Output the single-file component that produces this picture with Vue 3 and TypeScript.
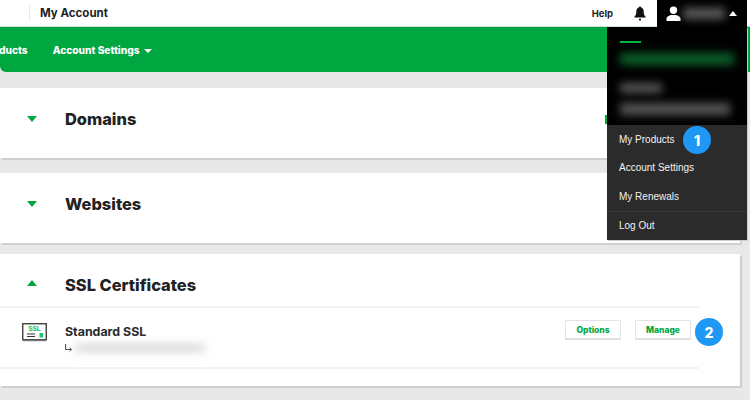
<script setup lang="ts">
interface Section { title: string; peek: boolean }
const collapsed: Section[] = [
  { title: 'Domains', peek: true },
  { title: 'Websites', peek: false },
]
const menu: string[] = ['My Products', 'Account Settings', 'My Renewals']
</script>

<template>
  <div class="page">
    <header class="topbar">
      <div class="brand"><span class="title">My Account</span></div>
      <div class="top-right">
        <span class="help">Help</span>
        <svg class="bell" width="12" height="15" viewBox="0 0 12 15">
          <path d="M6 0.5c.7 0 1.1.5 1.1 1.1 1.700.5 2.600 1.900 2.600 3.800 0 2.600.5 3.900 1.800 5.200v.9H.5v-.9C1.800 9.300 2.300 8 2.300 5.400c0-1.900.9-3.300 2.600-3.800C4.900 1 5.300.5 6 .5z" fill="#111" />
          <circle cx="6" cy="13.600" r="1.100" fill="#111" />
        </svg>
        <div class="user">
          <svg width="15" height="15" viewBox="0 0 15 15">
            <circle cx="7.500" cy="4.200" r="3.700" fill="#fff" />
            <path d="M0.500 15v-2.400c0-1.800 2.600-3 4.700-3.600h4.600c2.100.6 4.700 1.800 4.700 3.600V15z" fill="#fff" />
          </svg>
          <span class="blur user-name"></span>
          <span class="caret-up"></span>
        </div>
      </div>
    </header>

    <nav class="nav">
      <span class="nav-item products">Products</span>
      <span class="nav-item">Account Settings <i class="caret-down"></i></span>
    </nav>

    <main class="content">
      <section v-for="s in collapsed" :key="s.title" class="card">
        <div class="card-head">
          <span class="arrow down"></span>
          <h2>{{ s.title }}</h2>
          <span v-if="s.peek" class="peek"></span>
        </div>
      </section>

      <section class="card ssl">
        <div class="ssl-head">
          <span class="arrow up"></span>
          <h2>SSL Certificates</h2>
        </div>
        <div class="ssl-row">
          <svg class="cert" width="25" height="19" viewBox="0 0 25 19">
            <rect x="0.750" y="0.750" width="23.500" height="16" fill="#fff" stroke="#333" stroke-width="1.300" />
            <path d="M1 17.500h23" stroke="#777" stroke-width="1.400" />
            <text x="12.500" y="8" class="cert-text">SSL</text>
            <path d="M5 11h8M5 13.500h8" stroke="#333" stroke-width="1.200" />
            <rect x="17.500" y="10" width="3.500" height="4.500" fill="#1ec468" />
          </svg>
          <div class="ssl-info">
            <div class="ssl-name">Standard SSL</div>
            <div class="ssl-sub">
              <svg width="8" height="8" viewBox="0 0 8 8">
                <path d="M.6 0v5.500h5.400M4.600 3.800 6.600 5.500 4.600 7.200" fill="none" stroke="#444" stroke-width="1" />
              </svg>
              <span class="blur email"></span>
            </div>
          </div>
          <div class="actions">
            <button class="btn">Options</button>
            <button class="btn">Manage</button>
          </div>
          <span class="badge badge-two">2</span>
        </div>
      </section>
    </main>

    <aside class="dropdown">
      <div class="account-block">
        <span class="accent"></span>
        <span class="blur line-green"></span>
        <span class="blur line-gray short"></span>
        <span class="blur line-gray long"></span>
      </div>
      <ul class="menu">
        <li v-for="m in menu" :key="m">{{ m }}</li>
        <li class="logout">Log Out</li>
      </ul>
      <span class="badge badge-one">1</span>
    </aside>
  </div>
</template>

<style scoped>
.page {
  position: relative;
  width: 750px;
  height: 400px;
  overflow: hidden;
  background: #e8e8e8;
  font-family: "Inter", "Liberation Sans", sans-serif;
  color: #1f1f1f;
}
.topbar {
  display: flex;
  justify-content: space-between;
  height: 27px;
  background: #fff;
}
.brand {
  display: flex;
  align-items: center;
  margin: 5px 0 7px 29px;
  padding-left: 10px;
  border-left: 1px solid #e8e8e8;
}
.title {
  font-size: 11.500px;
  font-weight: 700;
  line-height: 15px;
  position: relative;
  top: 1px;
}
.top-right {
  display: flex;
  align-items: center;
  margin-right: 3px;
}
.help {
  font-size: 9.500px;
  font-weight: 700;
  margin-right: 21px;
}
.bell {
  margin-right: 11px;
}
.user {
  display: flex;
  align-items: center;
  width: 90px;
  height: 27px;
  padding-left: 9px;
  box-sizing: border-box;
  background: #000;
}
.user-name {
  display: block;
  width: 42px;
  height: 11px;
  margin-left: 2px;
  background: #5c5c5c;
}
.caret-up {
  margin-left: 4px;
  border-left: 4.500px solid transparent;
  border-right: 4.500px solid transparent;
  border-bottom: 5px solid #fff;
}
.nav {
  display: flex;
  align-items: center;
  gap: 25px;
  height: 45px;
  margin-top: -1px;
  overflow: hidden;
  background: #00a63f;
  border-top: 1px solid #cfe3d5;
  border-bottom-left-radius: 6px;
  color: #fff;
  font-size: 10.200px;
  font-weight: 800;
}
.nav-item {
  white-space: nowrap;
}
.products {
  margin-left: -18px;
}
.caret-down {
  display: inline-block;
  margin-left: 2px;
  vertical-align: 1px;
  border-left: 4px solid transparent;
  border-right: 4px solid transparent;
  border-top: 4.500px solid #fff;
}
.content {
  display: flex;
  flex-direction: column;
  gap: 15px;
  width: 740px;
  padding-top: 16px;
}
.card {
  background: #fff;
  box-shadow: 2px 2px 0 #cfcfcf;
}
.card-head {
  position: relative;
  display: flex;
  align-items: center;
  height: 70px;
  padding-bottom: 9px;
  box-sizing: border-box;
}
.ssl {
  height: 132px;
  margin-top: -4px;
}
.ssl-head {
  display: flex;
  align-items: center;
  height: 54px;
  width: 699px;
  border-bottom: 2px solid #f2f2f2;
  box-sizing: border-box;
  padding-top: 9px;
}
.arrow {
  width: 0;
  height: 0;
  margin-left: 27px;
  border-left: 5px solid transparent;
  border-right: 5px solid transparent;
}
.arrow.down {
  border-top: 6px solid #00a63f;
}
.arrow.up {
  border-bottom: 6px solid #00a63f;
  margin-top: -3px;
}
h2 {
  margin: 0 0 0 28px;
  font-size: 16.400px;
  font-weight: 800;
  line-height: 22px;
  color: #222;
}
.peek {
  position: absolute;
  left: 605px;
  top: 27px;
  width: 3px;
  height: 9px;
  background: #00a63f;
}
.ssl-row {
  position: relative;
  display: flex;
  align-items: flex-start;
  width: 699px;
  height: 59px;
  border-bottom: 2px solid #f2f2f2;
}
.cert {
  margin: 15px 0 0 22px;
}
.cert-text {
  font-family: "Liberation Sans", sans-serif;
  font-size: 6.500px;
  font-weight: 700;
  fill: #12b85a;
  text-anchor: middle;
}
.ssl-info {
  margin: 15px 0 0 18px;
}
.ssl-name {
  font-size: 12.400px;
  font-weight: 700;
  line-height: 17px;
  color: #2a2a2a;
}
.ssl-sub {
  display: flex;
  align-items: center;
  margin-top: 4px;
}
.email {
  display: block;
  width: 130px;
  height: 8px;
  margin-left: 2px;
  background: #d8d8d8;
}
.actions {
  display: flex;
  gap: 14px;
  margin: 12px 0 0 auto;
  padding-right: 8px;
}
.btn {
  width: 56px;
  height: 19px;
  padding: 0;
  background: #fff;
  border: 1px solid #e4e4e4;
  border-radius: 1px;
  box-shadow: 0 1px 0 #dcdcdc;
  color: #00a63f;
  font-family: "Inter", sans-serif;
  font-size: 8.500px;
  font-weight: 800;
}
.badge {
  position: absolute;
  display: flex;
  align-items: center;
  justify-content: center;
  width: 28px;
  height: 28px;
  border-radius: 50%;
  background: #1f97f4;
  color: #fff;
  font-family: "Inter", sans-serif;
  font-size: 14px;
  font-weight: 800;
}
.badge-two {
  left: 695px;
  top: 10px;
}
.dropdown {
  position: absolute;
  left: 607px;
  top: 27px;
  width: 140px;
  height: 213px;
  display: flex;
  flex-direction: column;
  background: #2b2b2b;
  box-shadow: 1px 1px 0 #ccc;
}
.account-block {
  display: flex;
  flex-direction: column;
  height: 98px;
  padding: 14px 13px 0;
  box-sizing: border-box;
  background: #000;
}
.accent {
  display: block;
  width: 21px;
  height: 2px;
  background: #00b545;
}
.blur {
  filter: blur(4px);
}
.line-green {
  display: block;
  width: 114px;
  height: 12px;
  margin-top: 10px;
  background: #0a5e28;
}
.line-gray {
  display: block;
  background: #555;
}
.line-gray.short {
  width: 42px;
  height: 10px;
  margin-top: 18px;
}
.line-gray.long {
  width: 110px;
  height: 12px;
  margin-top: 10px;
}
.menu {
  list-style: none;
  margin: 0;
  padding: 1px 0 0;
  font-family: "Liberation Sans", Arial, sans-serif;
  font-size: 10px;
  color: #f2f2f2;
}
.menu li {
  height: 28.500px;
  line-height: 28.500px;
  padding-left: 12px;
}
.menu .logout {
  height: 28px;
  line-height: 27px;
  border-top: 1px solid #383838;
}
.badge-one {
  left: 76px;
  top: 99px;
}
</style>
